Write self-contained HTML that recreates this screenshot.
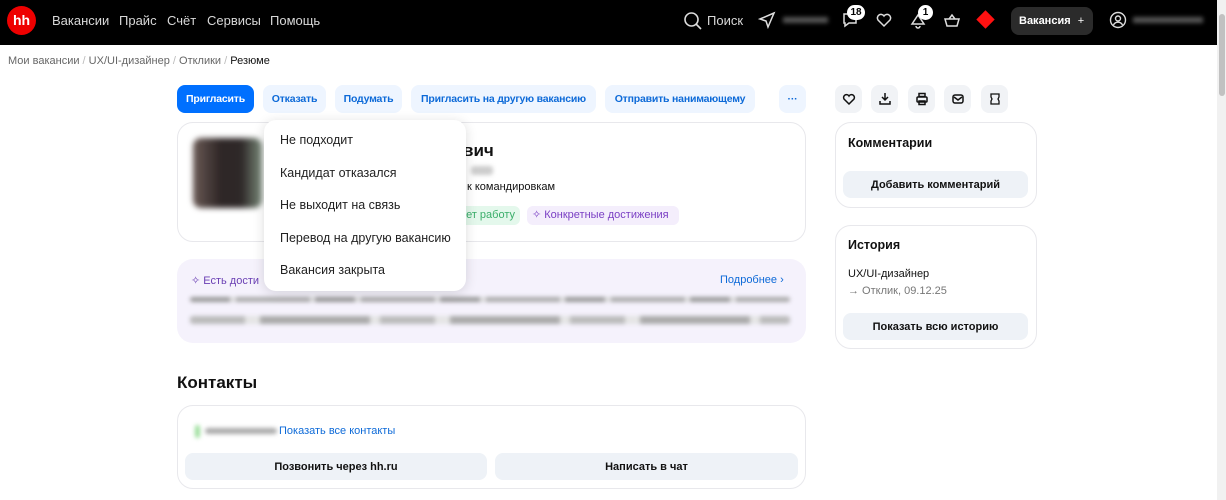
<!DOCTYPE html>
<html><head><meta charset="utf-8"><style>
*{box-sizing:border-box;margin:0;padding:0}
body{width:1226px;height:500px;overflow:hidden;background:#fff;font-family:"Liberation Sans",sans-serif;color:#111;position:relative}
.a{position:absolute}
.hdr{left:0;top:0;width:1217px;height:45px;background:#000}
.nav{color:#d8d8d8;font-size:13px;top:13px}
.btn{position:absolute;top:85px;height:28px;border-radius:8px;background:#eef5ff;color:#0d6ad8;font-size:10.5px;font-weight:bold;letter-spacing:-0.2px;display:flex;align-items:center;justify-content:center}
.ib{position:absolute;top:85px;width:27px;height:28px;border-radius:8px;background:#f1f3f6;display:flex;align-items:center;justify-content:center}
.card{position:absolute;border:1px solid #e8e8ec;border-radius:16px;background:#fff}
.gb{position:absolute;background:#eef2f7;border-radius:8px;font-size:11px;font-weight:bold;display:flex;align-items:center;justify-content:center;color:#111}
.blur{position:absolute;filter:blur(2px);background:#ccc;border-radius:3px}
.mi{position:absolute;left:280px;font-size:12.5px;color:#222}
</style></head><body>
<div class="a hdr"></div>
<div class="a" style="left:7px;top:6px;width:29px;height:29px;border-radius:50%;background:#e00;color:#fff;font-weight:bold;font-size:14px;text-align:center;line-height:28px">hh</div>
<div class="a nav" style="left:52px">Вакансии</div>
<div class="a nav" style="left:119px">Прайс</div>
<div class="a nav" style="left:167px">Счёт</div>
<div class="a nav" style="left:207px">Сервисы</div>
<div class="a nav" style="left:270px">Помощь</div>
<svg class="a" style="left:683px;top:11px" width="20" height="20" viewBox="0 0 20 20" fill="none" stroke="#ddd" stroke-width="1.6"><circle cx="8.5" cy="8.5" r="6.5"/><path d="M13 13l5 5"/></svg>
<div class="a nav" style="left:707px">Поиск</div>
<svg class="a" style="left:758px;top:11px" width="18" height="18" viewBox="0 0 18 18" fill="none" stroke="#ddd" stroke-width="1.5"><path d="M16 2L2 8l6 2 2 6z"/></svg>
<div class="a" style="left:783px;top:17px;width:45px;height:6px;background:#555;filter:blur(2px)"></div>
<svg class="a" style="left:841px;top:11px" width="18" height="18" viewBox="0 0 18 18" fill="none" stroke="#ddd" stroke-width="1.5"><path d="M3 3h12v9H8l-4 3v-3H3z"/></svg>
<div class="a" style="left:847px;top:5px;width:18px;height:15px;border-radius:8px;background:#fff;color:#000;font-size:10px;font-weight:bold;text-align:center;line-height:15px">18</div>
<svg class="a" style="left:875px;top:11px" width="18" height="18" viewBox="0 0 18 18" fill="none" stroke="#ddd" stroke-width="1.5"><path d="M9 15L3 9a3.3 3.3 0 016-4 3.3 3.3 0 016 4z"/></svg>
<svg class="a" style="left:909px;top:12px" width="18" height="18" viewBox="0 0 18 18" fill="none" stroke="#ddd" stroke-width="1.5"><path d="M3 12l6-9 6 9zM7 14a2 2 0 004 0"/></svg>
<div class="a" style="left:918px;top:5px;width:15px;height:15px;border-radius:8px;background:#fff;color:#000;font-size:10px;font-weight:bold;text-align:center;line-height:15px">1</div>
<svg class="a" style="left:943px;top:11px" width="18" height="18" viewBox="0 0 18 18" fill="none" stroke="#ddd" stroke-width="1.5"><path d="M2 8h14l-2 7H4zM6 8l3-4 3 4"/></svg>
<div class="a" style="left:979px;top:13px;width:13px;height:13px;background:#f11;transform:rotate(45deg)"></div>
<div class="a" style="left:1011px;top:7px;width:82px;height:28px;border-radius:8px;background:#2b2b2b;color:#fff;font-size:11px;font-weight:bold;line-height:28px;padding-left:8px">Вакансия <span style="font-weight:normal;margin-left:4px">+</span></div>
<svg class="a" style="left:1109px;top:11px" width="18" height="18" viewBox="0 0 18 18" fill="none" stroke="#ddd" stroke-width="1.4"><circle cx="9" cy="9" r="7.5"/><circle cx="9" cy="7.5" r="2.5"/><path d="M4.5 14a5 5 0 019 0"/></svg>
<div class="a" style="left:1133px;top:17px;width:70px;height:6px;background:#555;filter:blur(2px)"></div>
<div class="a" style="left:1217px;top:0;width:9px;height:500px;background:#f1f1f1"></div>
<div class="a" style="left:1219px;top:14px;width:6px;height:82px;background:#c1c1c1;border-radius:3px"></div>

<div class="a" style="left:8px;top:55px;font-size:11px;color:#666">Мои вакансии <span style="color:#bbb">/</span> UX/UI-дизайнер <span style="color:#bbb">/</span> Отклики <span style="color:#bbb">/</span> <span style="color:#111">Резюме</span></div>

<div class="btn" style="left:177px;width:77px;background:#0070ff;color:#fff">Пригласить</div>
<div class="btn" style="left:263px;width:63px">Отказать</div>
<div class="btn" style="left:335px;width:67px">Подумать</div>
<div class="btn" style="left:411px;width:185px">Пригласить на другую вакансию</div>
<div class="btn" style="left:605px;width:150px">Отправить нанимающему</div>
<div class="btn" style="left:779px;width:27px">···</div>
<div class="ib" style="left:835px"><svg width="14" height="14" viewBox="0 0 14 14" fill="none" stroke="#111" stroke-width="1.5"><path d="M7 12L2 7a2.6 2.6 0 015-3 2.6 2.6 0 015 3z"/></svg></div>
<div class="ib" style="left:871px"><svg width="14" height="14" viewBox="0 0 14 14" fill="none" stroke="#111" stroke-width="1.5"><path d="M7 1v7M4 5l3 3 3-3M2 9v3h10V9"/></svg></div>
<div class="ib" style="left:908px"><svg width="14" height="14" viewBox="0 0 14 14" fill="none" stroke="#111" stroke-width="1.5"><rect x="4" y="1.5" width="6" height="3"/><rect x="2" y="5" width="10" height="5" rx="1"/><rect x="4" y="9" width="6" height="3.5"/></svg></div>
<div class="ib" style="left:944px"><svg width="14" height="14" viewBox="0 0 14 14" fill="none" stroke="#111" stroke-width="1.5"><rect x="2" y="3" width="10" height="8" rx="2"/><path d="M3 5l4 3 4-3"/></svg></div>
<div class="ib" style="left:981px"><svg width="14" height="14" viewBox="0 0 14 14" fill="none" stroke="#111" stroke-width="1.3"><path d="M3 2h8v3l-1 2 1 2v3H3V9l1-2-1-2z"/></svg></div>

<div class="card" style="left:177px;top:122px;width:629px;height:120px"></div>
<div class="a" style="left:193px;top:138px;width:69px;height:70px;border-radius:8px;background:linear-gradient(90deg,#6a5a55,#2e2626 40%,#2e2828 70%,#7a8a7a);filter:blur(3px)"></div>
<div class="a" style="left:463px;top:141px;font-size:17px;font-weight:bold">вич</div>
<div class="blur" style="left:471px;top:166px;width:22px;height:9px"></div>
<div class="a" style="left:467px;top:181px;font-size:11px">к командировкам</div>
<div class="a" style="left:450px;top:206px;width:70px;height:19px;border-radius:6px;background:#e4f8ec;color:#3aae6a;font-size:11px;line-height:19px;text-align:right;padding-right:5px">ет работу</div>
<div class="a" style="left:527px;top:206px;width:152px;height:19px;border-radius:6px;background:#f4eefc;color:#7a3fc4;font-size:11px;line-height:19px;padding-left:5px">✧ Конкретные достижения</div>

<div class="a" style="left:177px;top:259px;width:629px;height:84px;border-radius:16px;background:#f5f2fc"></div>
<div class="a" style="left:191px;top:274px;font-size:11px;color:#6a3fb4">✧ Есть дости</div>
<div class="a" style="left:720px;top:274px;font-size:11px;color:#0d6ad8">Подробнее ›</div>
<div class="blur" style="left:190px;top:297px;width:600px;height:5px;background:repeating-linear-gradient(90deg,#999 0 40px,#ddd 40px 46px,#aaa 46px 120px,#e0e0e0 120px 125px)"></div>
<div class="blur" style="left:190px;top:316px;width:600px;height:8px;background:repeating-linear-gradient(90deg,#bbb 0 55px,#e5e5e5 55px 70px,#aaa 70px 180px,#e5e5e5 180px 190px)"></div>

<div class="a" style="left:264px;top:120px;width:202px;height:171px;border-radius:12px;background:#fff;box-shadow:0 2px 12px rgba(0,0,0,.14)"></div>
<div class="mi" style="top:133px">Не подходит</div>
<div class="mi" style="top:166px">Кандидат отказался</div>
<div class="mi" style="top:198px">Не выходит на связь</div>
<div class="mi" style="top:231px">Перевод на другую вакансию</div>
<div class="mi" style="top:263px">Вакансия закрыта</div>

<div class="a" style="left:177px;top:373px;font-size:17px;font-weight:bold">Контакты</div>
<div class="card" style="left:177px;top:405px;width:629px;height:84px"></div>
<div class="blur" style="left:195px;top:425px;width:5px;height:13px;background:#9d9"></div>
<div class="blur" style="left:205px;top:428px;width:72px;height:6px;background:#aaa"></div>
<div class="a" style="left:279px;top:425px;font-size:11px;color:#0d6ad8">Показать все контакты</div>
<div class="gb" style="left:185px;top:453px;width:302px;height:27px">Позвонить через hh.ru</div>
<div class="gb" style="left:495px;top:453px;width:303px;height:27px">Написать в чат</div>

<div class="card" style="left:835px;top:122px;width:202px;height:86px"></div>
<div class="a" style="left:848px;top:136px;font-size:12.5px;font-weight:bold">Комментарии</div>
<div class="gb" style="left:843px;top:171px;width:185px;height:27px">Добавить комментарий</div>
<div class="card" style="left:835px;top:225px;width:202px;height:124px"></div>
<div class="a" style="left:848px;top:238px;font-size:12.5px;font-weight:bold">История</div>
<div class="a" style="left:848px;top:268px;font-size:11px">UX/UI-дизайнер</div>
<div class="a" style="left:848px;top:285px;font-size:11px;color:#777">→ Отклик, 09.12.25</div>
<div class="gb" style="left:843px;top:313px;width:185px;height:27px">Показать всю историю</div>
</body></html>
